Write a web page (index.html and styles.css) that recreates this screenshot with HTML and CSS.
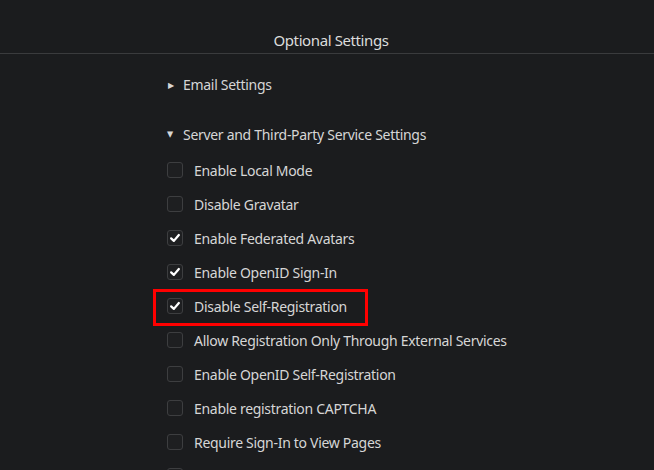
FILE: index.html
```html
<!DOCTYPE html>
<html>
<head>
<meta charset="utf-8">
<link rel="stylesheet" href="styles.css">
</head>
<body>
<header class="header"><h1 class="title">Optional Settings</h1></header>
<main class="content">
  <div class="section collapsed"><span class="tri">&#9654;</span><span class="label">Email Settings</span></div>
  <div class="section expanded"><span class="tri down">&#9654;</span><span class="label">Server and Third-Party Service Settings</span></div>
  <ul class="options">
    <li class="opt"><span class="box"></span><span class="label">Enable Local Mode</span></li>
    <li class="opt"><span class="box"></span><span class="label">Disable Gravatar</span></li>
    <li class="opt"><span class="box checked"><svg viewBox="0 0 16 16"><path d="M3.6 8.4 L6.7 11.3 L12.4 4.6"/></svg></span><span class="label">Enable Federated Avatars</span></li>
    <li class="opt"><span class="box checked"><svg viewBox="0 0 16 16"><path d="M3.6 8.4 L6.7 11.3 L12.4 4.6"/></svg></span><span class="label">Enable OpenID Sign-In</span></li>
    <li class="opt"><span class="row-hl"><span class="box checked"><svg viewBox="0 0 16 16"><path d="M3.6 8.4 L6.7 11.3 L12.4 4.6"/></svg></span><span class="label">Disable Self-Registration</span></span></li>
    <li class="opt"><span class="box"></span><span class="label">Allow Registration Only Through External Services</span></li>
    <li class="opt"><span class="box"></span><span class="label">Enable OpenID Self-Registration</span></li>
    <li class="opt"><span class="box"></span><span class="label">Enable registration CAPTCHA</span></li>
    <li class="opt"><span class="box"></span><span class="label">Require Sign-In to View Pages</span></li>
    <li class="opt"><span class="box"></span></li>
  </ul>
</main>
</body>
</html>
```
FILE: styles.css
```css
html, body {
  margin: 0;
  padding: 0;
  background: #1b1c1e;
  color: #d6d6d6;
  font-family: "Noto Sans", "DejaVu Sans", sans-serif;
  font-size: 14px;
  letter-spacing: -0.3px;
  overflow: hidden;
  height: 470px;
}
.header {
  height: 54px;
  border-bottom: 1px solid #3a3b3d;
  display: flex;
  align-items: flex-end;
  justify-content: center;
  box-sizing: border-box;
  padding-left: 8px;
}
.title {
  margin: 0 0 3px 0;
  font-size: 15px;
  font-weight: normal;
  letter-spacing: -0.4px;
  color: #dcdcdc;
  line-height: 20px;
}
.content {
  padding-left: 167px;
  white-space: nowrap;
}
.section {
  display: flex;
  align-items: center;
  height: 20px;
  gap: 8px;
}
.collapsed { margin-top: 20px; }
.expanded { margin-top: 30px; }
.tri {
  font-size: 8px;
  width: 8px;
  display: inline-block;
  text-align: center;
  color: #d6d6d6;
}
.tri.down { transform: rotate(90deg); }
.options {
  list-style: none;
  margin: 18px 0 0 0;
  padding: 0;
  display: flex;
  flex-direction: column;
  gap: 18px;
}
.opt {
  display: flex;
  align-items: center;
  height: 16px;
}
.opt .label {
  margin-left: 11px;
}
.row-hl {
  position: relative;
  display: inline-flex;
  align-items: center;
}
.row-hl::after {
  content: "";
  position: absolute;
  top: -8px;
  bottom: -10px;
  left: -14px;
  right: -21px;
  border: 3px solid #ff0000;
}
.box {
  width: 16px;
  height: 16px;
  box-sizing: border-box;
  border: 1px solid #3d3e40;
  border-radius: 3px;
  background: #1e1f21;
  display: inline-flex;
  flex: none;
}
.box svg {
  width: 14px;
  height: 14px;
}
.box svg path {
  fill: none;
  stroke: #ffffff;
  stroke-width: 2.6;
  stroke-linecap: round;
  stroke-linejoin: round;
}
```
